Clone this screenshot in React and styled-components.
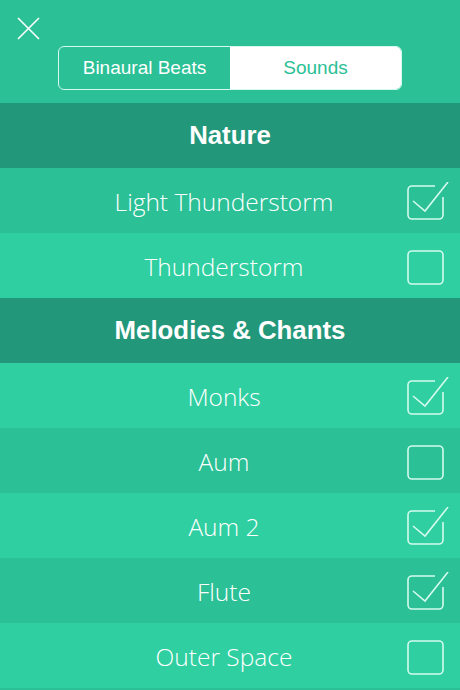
import React from "react";
import styled, { createGlobalStyle } from "styled-components";

const Global = createGlobalStyle`
  html, body { margin: 0; padding: 0; background: #2bc096; }
  body { font-family: "Liberation Sans", Arial, sans-serif; }
`;

const Screen = styled.div`
  width: 460px;
  height: 690px;
  overflow: hidden;
  background: #2bc096;
  display: flex;
  flex-direction: column;
`;

const TopBar = styled.div`
  height: 103px;
  position: relative;
  display: flex;
  justify-content: center;
  padding-top: 46px;
  box-sizing: border-box;
`;

const CloseButton = styled.button`
  position: absolute;
  left: 16px;
  top: 16px;
  width: 26px;
  height: 26px;
  padding: 0;
  border: 0;
  background: none;
  display: flex;
`;

const Segmented = styled.div`
  width: 344px;
  height: 44px;
  box-sizing: border-box;
  border: 1.5px solid #d4fbee;
  border-radius: 6px;
  display: grid;
  grid-template-columns: 1fr 1fr;
  overflow: hidden;
`;

const Segment = styled.div`
  display: flex;
  align-items: center;
  justify-content: center;
  font-size: 19px;
  color: ${(p) => (p.$active ? "#2bc096" : "#ffffff")};
  background: ${(p) => (p.$active ? "#ffffff" : "transparent")};
`;

const SectionHeader = styled.div`
  height: 65px;
  background: #23977a;
  color: #ffffff;
  font-weight: 700;
  font-size: 25.8px;
  display: flex;
  align-items: center;
  justify-content: center;
`;

const Row = styled.div`
  height: 65px;
  background: ${(p) => (p.$light ? "#2fcfa1" : "#2bc096")};
  display: flex;
  align-items: center;
  position: relative;
  padding-right: 12px;
`;

const RowLabel = styled.div`
  flex: 1;
  text-align: center;
  color: #ffffff;
  font-family: "Open Sans", "Liberation Sans", sans-serif;
  font-weight: 300;
  font-size: 24.5px;
  padding-top: 2px;
`;

const Check = styled.svg`
  position: absolute;
  left: 406px;
  top: 14px;
`;

const CheckBox = ({ checked }) => (
  <Check width="46" height="40" viewBox="0 0 46 40" fill="none">
    {checked ? (
      <>
        <path
          d="M29 4 H6 a4 4 0 0 0 -4 4 V33 a4 4 0 0 0 4 4 H33 a4 4 0 0 0 4 -4 V15"
          stroke="#d4fbee"
          strokeWidth="1.6"
          fill="none"
        />
        <path d="M7 19 L19 29 L42 0" stroke="#d4fbee" strokeWidth="1.6" fill="none" />
      </>
    ) : (
      <rect x="2" y="4" width="35" height="33" rx="4" stroke="#d4fbee" strokeWidth="1.6" />
    )}
  </Check>
);

const sections = [
  {
    title: "Nature",
    items: [
      { name: "Light Thunderstorm", checked: true },
      { name: "Thunderstorm", checked: false },
    ],
  },
  {
    title: "Melodies & Chants",
    items: [
      { name: "Monks", checked: true },
      { name: "Aum", checked: false },
      { name: "Aum 2", checked: true },
      { name: "Flute", checked: true },
      { name: "Outer Space", checked: false },
    ],
  },
];

export default function App() {
  return (
    <>
      <Global />
      <Screen>
        <TopBar>
          <CloseButton aria-label="Close">
            <svg width="26" height="26" viewBox="0 0 26 26">
              <path d="M2 2 L23 23 M23 2 L2 23" stroke="#ffffff" strokeWidth="1.6" />
            </svg>
          </CloseButton>
          <Segmented>
            <Segment>Binaural Beats</Segment>
            <Segment $active>Sounds</Segment>
          </Segmented>
        </TopBar>
        {sections.map((s) => (
          <React.Fragment key={s.title}>
            <SectionHeader>{s.title}</SectionHeader>
            {s.items.map((it, i) => (
              <Row key={it.name} $light={s.title === "Nature" ? i % 2 === 1 : i % 2 === 0}>
                <RowLabel>{it.name}</RowLabel>
                <CheckBox checked={it.checked} />
              </Row>
            ))}
          </React.Fragment>
        ))}
      </Screen>
    </>
  );
}
